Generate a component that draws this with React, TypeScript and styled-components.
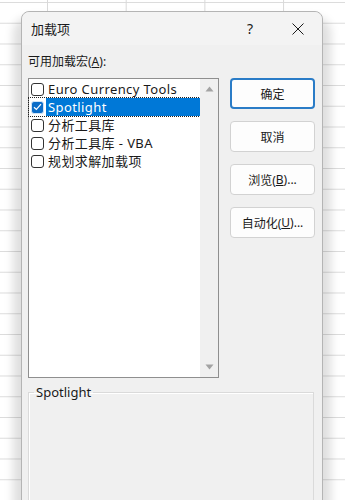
import React from "react";
import styled, { createGlobalStyle } from "styled-components";

const GlobalStyle = createGlobalStyle`
  html, body {
    margin: 0;
    padding: 0;
  }
  body {
    font-family: "Noto Sans", "Noto Sans CJK SC", sans-serif;
    color: #1a1a1a;
  }
`;

const Sheet = styled.div`
  width: 345px;
  height: 500px;
  overflow: hidden;
  box-sizing: border-box;
  padding: 11px 22px 0 21px;
  background-color: #ffffff;
  background-image: linear-gradient(to right, #d9d9d9 1px, transparent 1px),
    linear-gradient(to bottom, #dcdcdc 1px, transparent 1px);
  background-size: 78.7px 100%, 100% 20.75px;
  background-position: 47px 0, 0 2px;
`;

const Dialog = styled.div`
  width: 302px;
  height: 540px;
  box-sizing: border-box;
  border: 1px solid #b4b4b4;
  border-radius: 8px;
  background: #f0f0f0;
  box-shadow: 0 14px 10px 8px rgba(0, 0, 0, 0.13);
  display: flex;
  flex-direction: column;
`;

const TitleBar = styled.div`
  height: 33px;
  display: flex;
  align-items: center;
  padding: 0 0 0 9px;
  background: #f3f3f3;
  border-radius: 8px 8px 0 0;
`;

const Title = styled.div`
  flex: 1;
  font-size: 13px;
  color: #1a1a1a;
`;

const TitleButton = styled.div`
  width: 48px;
  height: 33px;
  display: flex;
  align-items: center;
  justify-content: center;
  font-size: 14px;
  color: #1a1a1a;
`;

const Body = styled.div`
  display: flex;
  flex-direction: column;
  padding: 0 7px 0 6px;
`;

const Caption = styled.div`
  margin-top: 9px;
  font-size: 12px;
  line-height: 16px;
  height: 16px;
  u {
    text-decoration: underline;
  }
`;

const Main = styled.div`
  margin-top: 8px;
  display: flex;
  gap: 11px;
`;

const ListBox = styled.div`
  width: 191px;
  height: 300px;
  box-sizing: border-box;
  border: 1px solid #8f8f8f;
  background: #ffffff;
  display: flex;
`;

const Items = styled.div`
  flex: 1;
  padding-top: 1px;
  display: flex;
  flex-direction: column;
`;

const Item = styled.div<{ $focused?: boolean }>`
  height: 18px;
  display: flex;
  align-items: center;
  padding-left: 2px;
  outline: ${(p) => (p.$focused ? "1px dotted #202020" : "none")};
  outline-offset: 0;
`;

const Box = styled.div<{ $checked?: boolean }>`
  width: 13px;
  height: 13px;
  box-sizing: border-box;
  border: 1px solid ${(p) => (p.$checked ? "#cfe3f7" : "#333333")};
  border-radius: 3px;
  background: ${(p) => (p.$checked ? "#0a6cc8" : "#ffffff")};
  display: flex;
  align-items: center;
  justify-content: center;
  flex-shrink: 0;
`;

const ItemText = styled.div<{ $selected?: boolean }>`
  flex: 1;
  margin-left: 2px;
  padding-left: 2px;
  height: 18px;
  line-height: 18px;
  font-size: 13px;
  letter-spacing: 0.4px;
  white-space: nowrap;
  background: ${(p) => (p.$selected ? "#0078d7" : "transparent")};
  color: ${(p) => (p.$selected ? "#ffffff" : "#1a1a1a")};
`;

const ScrollTrack = styled.div`
  width: 18px;
  background: #f0f0f0;
  display: flex;
  flex-direction: column;
  justify-content: space-between;
  align-items: center;
  padding: 7px 0;
`;

const Buttons = styled.div`
  display: flex;
  flex-direction: column;
  gap: 12px;
`;

const Button = styled.div<{ $primary?: boolean }>`
  width: 85px;
  height: 31px;
  box-sizing: border-box;
  border-radius: 4px;
  border: ${(p) => (p.$primary ? "2px solid #2a7cc7" : "1px solid #d2d2d2")};
  background: #fdfdfd;
  display: flex;
  align-items: center;
  justify-content: center;
  font-size: 12px;
  color: #1a1a1a;
  u {
    text-decoration: underline;
  }
`;

const Group = styled.fieldset`
  margin: 6px 1px 0 0;
  padding: 0;
  height: 140px;
  border: 1px solid #dadada;
  box-shadow: inset 1px 1px 0 #ffffff;
  legend {
    margin-left: 5px;
    padding: 0 2px;
    font-size: 13px;
    line-height: 17px;
    color: #1a1a1a;
  }
`;

const Arrow: React.FC<{ up?: boolean }> = ({ up }) => (
  <svg width="9" height="6" viewBox="0 0 9 6">
    <path d={up ? "M0.5 5.5 L4.5 0.5 L8.5 5.5 Z" : "M0.5 0.5 L4.5 5.5 L8.5 0.5 Z"} fill="#a3a3a3" />
  </svg>
);

const items = ["Euro Currency Tools", "Spotlight", "分析工具库", "分析工具库 - VBA", "规划求解加载项"];

export default function App() {
  return (
    <>
      <GlobalStyle />
      <Sheet>
        <Dialog>
          <TitleBar>
            <Title>加载项</Title>
            <TitleButton>?</TitleButton>
            <TitleButton>
              <svg width="12" height="12" viewBox="0 0 12 12">
                <path d="M0.5 0.5 L11.5 11.5 M11.5 0.5 L0.5 11.5" stroke="#1a1a1a" strokeWidth="1" />
              </svg>
            </TitleButton>
          </TitleBar>
          <Body>
            <Caption>
              可用加载宏(<u>A</u>):
            </Caption>
            <Main>
              <ListBox>
                <Items>
                  {items.map((name, i) => {
                    const sel = i === 1;
                    return (
                      <Item key={name} $focused={sel}>
                        <Box $checked={sel}>
                          {sel && (
                            <svg width="9" height="8" viewBox="0 0 9 8">
                              <path d="M1 4.2 L3.4 6.5 L8 1.2" stroke="#ffffff" strokeWidth="1.2" fill="none" />
                            </svg>
                          )}
                        </Box>
                        <ItemText $selected={sel}>{name}</ItemText>
                      </Item>
                    );
                  })}
                </Items>
                <ScrollTrack>
                  <Arrow up />
                  <Arrow />
                </ScrollTrack>
              </ListBox>
              <Buttons>
                <Button $primary>确定</Button>
                <Button>取消</Button>
                <Button>
                  浏览(<u>B</u>)...
                </Button>
                <Button>
                  自动化(<u>U</u>)...
                </Button>
              </Buttons>
            </Main>
            <Group>
              <legend>Spotlight</legend>
            </Group>
          </Body>
        </Dialog>
      </Sheet>
    </>
  );
}
